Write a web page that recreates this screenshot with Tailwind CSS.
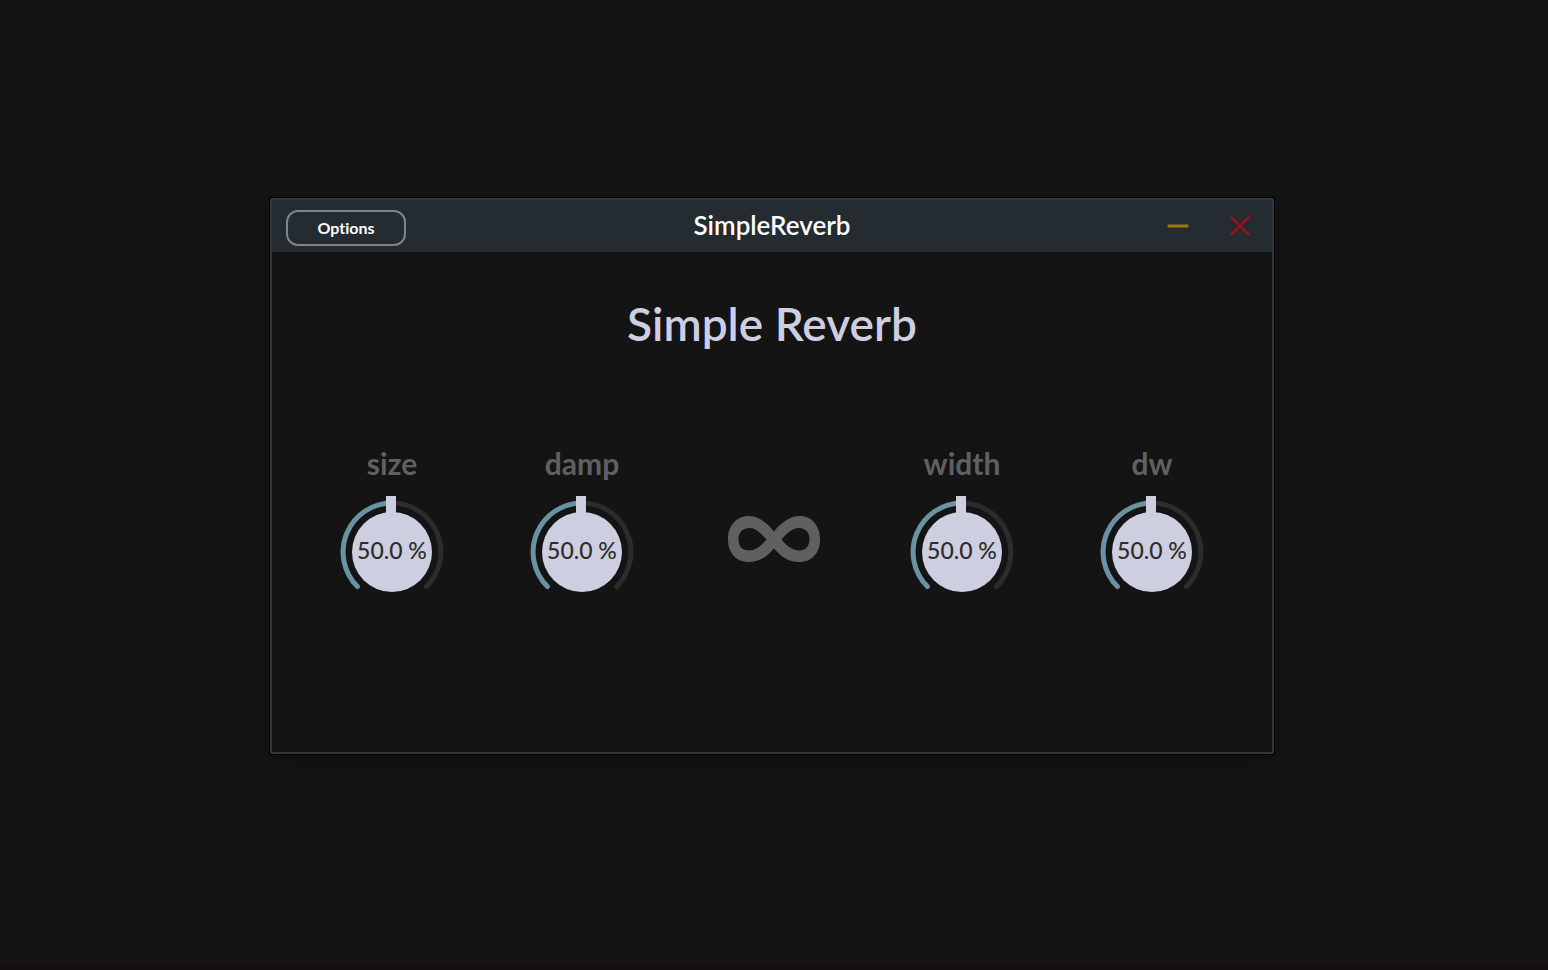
<!DOCTYPE html>
<html lang="en">
<head>
<meta charset="utf-8">
<meta name="viewport" content="width=device-width, initial-scale=1">
<title>SimpleReverb</title>
<script src="https://cdn.jsdelivr.net/npm/@tailwindcss/browser@4"></script>
</head>
<body class="min-h-screen bg-[#141414] font-['Lato',sans-serif] [font-variant-ligatures:none] font-medium flex flex-col items-center pt-[198px] pr-1 border-b-4 border-[#150f12]">
<svg class="hidden">
  <symbol id="knob" viewBox="0 0 120 100">
    <path d="M60 7A49 49 0 0 1 94.6 90.6" fill="none" stroke="#2c2c2c" stroke-width="5" stroke-linecap="round"/>
    <path d="M25.4 90.6A49 49 0 0 1 60 7" fill="none" stroke="#6b92a2" stroke-width="5" stroke-linecap="round"/>
    <circle cx="60" cy="56" r="40" fill="#cecee1"/>
    <path d="M54 0h10v20H54z" fill="#cecee1"/>
  </symbol>
</svg>
<main class="w-full max-w-[1004px] border-2 border-[#2c373e] rounded-xs bg-[#141414] shadow-[0_0_0_1px_#000,0_8px_24px_rgba(0,0,0,0.2)]">
  <header class="grid grid-cols-3 items-center h-[52px] bg-[#242c31] px-[14px]">
    <button class="mt-1 h-9 w-[120px] rounded-xl border-2 border-[#7e8588] text-[16px] leading-none font-bold text-white">Options</button>
    <div class="pb-[2px] text-center text-[26px] leading-8 font-semibold text-white whitespace-nowrap">SimpleReverb</div>
    <div class="flex justify-end gap-10">
      <button aria-label="Minimize"><svg class="block size-[22px]" viewBox="0 0 22 22"><rect x=".5" y="9.5" width="21" height="3" rx="1" fill="#a1770f"/></svg></button>
      <button class="mr-[7px]" aria-label="Close"><svg class="block size-[22px]" viewBox="0 0 22 22"><path d="M1.5 1.5l19 19M20.5 1.5l-19 19" stroke="#951018" stroke-width="2.6"/></svg></button>
    </div>
  </header>
  <section class="px-[25px] h-[500px]">
    <h1 class="pt-11 text-center text-[46px] leading-[56px] font-semibold text-[#cecee1]">Simple Reverb</h1>
    <div class="mt-[95px] grid grid-cols-5 text-[#606060]">
      <div class="flex flex-col items-center">
        <label for="size" class="text-[30px] leading-8 font-bold">size</label>
        <div class="relative mt-[17px] w-[120px]">
          <svg class="block w-full h-[100px]"><use href="#knob"/></svg>
          <output for="size" class="absolute inset-x-0 top-10 text-center text-[23px] leading-7 text-[#2c2c2c]">50.0 %</output>
          <input id="size" type="range" value="50" class="absolute inset-0 size-full opacity-0">
        </div>
      </div>
      <div class="flex flex-col items-center">
        <label for="damp" class="text-[30px] leading-8 font-bold">damp</label>
        <div class="relative mt-[17px] w-[120px]">
          <svg class="block w-full h-[100px]"><use href="#knob"/></svg>
          <output for="damp" class="absolute inset-x-0 top-10 text-center text-[23px] leading-7 text-[#2c2c2c]">50.0 %</output>
          <input id="damp" type="range" value="50" class="absolute inset-0 size-full opacity-0">
        </div>
      </div>
      <div class="flex justify-center pt-[65px] pl-1">
        <button class="h-[54px]" aria-label="Freeze">
          <svg class="block w-[100px] h-[54px]" viewBox="0 0 100 54"><path fill="#606060" fill-rule="evenodd" d="M50 19.500C58 10 66 4 75.500 4C88 4 96 14 96 27C96 41 88 50 75 50C66 50 58 46 50 36.500C42 46 34 50 25 50C12 50 4 41 4 27C4 14 12 4 25 4C34 4 42 10 50 19.500ZM42.500 27.500C36 20 31 16 25.500 16C18 16 14.500 21 14.500 27C14.500 34 18 38.500 25.500 38.500C31 38.500 36 35 42.500 27.500ZM57.500 27.500C64 35 69 38.500 75 38.500C82 38.500 85.500 34 85.500 27C85.500 21 82 16 75 16C69 16 64 20 57.500 27.500Z"/></svg>
        </button>
      </div>
      <div class="flex flex-col items-center">
        <label for="width" class="text-[30px] leading-8 font-bold">width</label>
        <div class="relative mt-[17px] w-[120px]">
          <svg class="block w-full h-[100px]"><use href="#knob"/></svg>
          <output for="width" class="absolute inset-x-0 top-10 text-center text-[23px] leading-7 text-[#2c2c2c]">50.0 %</output>
          <input id="width" type="range" value="50" class="absolute inset-0 size-full opacity-0">
        </div>
      </div>
      <div class="flex flex-col items-center">
        <label for="dw" class="text-[30px] leading-8 font-bold">dw</label>
        <div class="relative mt-[17px] w-[120px]">
          <svg class="block w-full h-[100px]"><use href="#knob"/></svg>
          <output for="dw" class="absolute inset-x-0 top-10 text-center text-[23px] leading-7 text-[#2c2c2c]">50.0 %</output>
          <input id="dw" type="range" value="50" class="absolute inset-0 size-full opacity-0">
        </div>
      </div>
    </div>
  </section>
</main>
</body>
</html>
